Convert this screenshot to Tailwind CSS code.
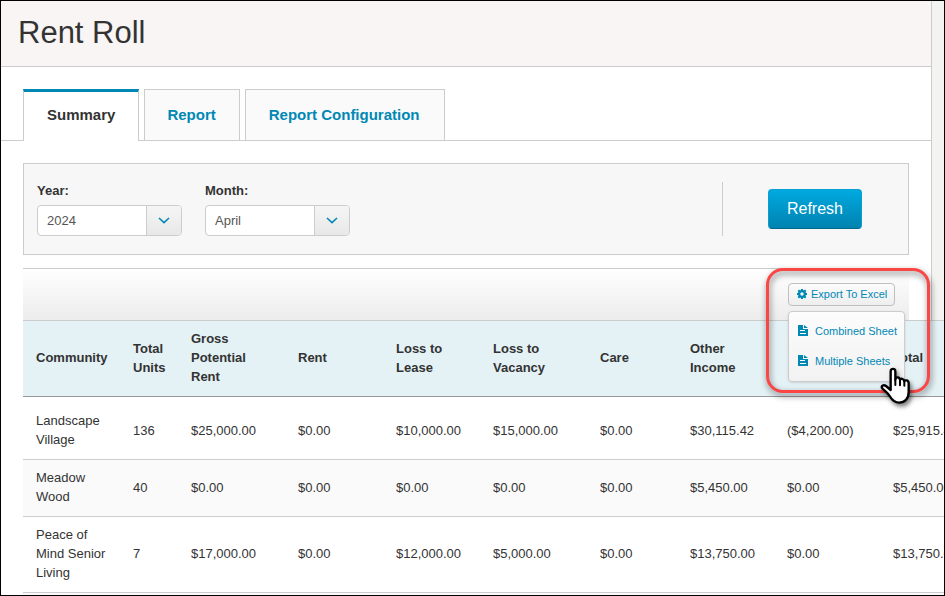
<!DOCTYPE html>
<html lang="en">
<head>
    <meta charset="UTF-8">
    <meta name="viewport" content="width=device-width, initial-scale=1.0">
    <title>Rent Roll</title>
    <script src="https://cdn.jsdelivr.net/npm/@tailwindcss/browser@4"></script>
</head>
<body class="h-screen overflow-hidden border border-black bg-[#f3f3f2] pr-3 font-['Liberation_Sans',Arial,sans-serif] text-[13px] leading-[19px] text-[#333]">
    <main class="min-h-full border-r border-[#ccc] bg-white">
        <!-- Page header -->
        <header class="border-b border-[#ccc] bg-[#f9f5f4] px-[17px] pt-[14px] pb-[15px]">
            <h1 class="text-[31px] leading-9">Rent Roll</h1>
        </header>

        <!-- Tabs -->
        <nav class="mt-[22px] flex gap-[5px] border-b border-[#ccc] pl-[22px] text-[15px] font-bold">
            <a href="#summary" class="-mb-px flex h-[52px] items-center border-x border-t-3 border-x-[#ccc] border-t-[#0088b5] bg-white px-[23px] pb-[5px]">Summary</a>
            <a href="#report" class="flex h-[51px] items-center border border-b-0 border-[#ccc] bg-[#fafafa] pr-[23px] pl-[22px] pb-px text-[#0088b5]">Report</a>
            <a href="#configuration" class="flex h-[51px] items-center border border-b-0 border-[#ccc] bg-[#fafafa] pr-6 pl-[23px] pb-px text-[#0088b5]">Report Configuration</a>
        </nav>

        <div class="px-[22px] pt-[22px]">
            <!-- Filters -->
            <form class="flex items-center justify-between border border-[#ccc] bg-[#f7f7f7] pt-[17px] pr-[46px] pb-[18px] pl-[13px]">
                <div class="flex gap-[23px]">
                    <div>
                        <label for="year" class="block font-bold">Year:</label>
                        <div class="relative mt-[5px] flex h-[31px] w-[145px] overflow-hidden rounded border border-[#ccc] bg-white">
                            <select id="year" class="w-full appearance-none pl-[9px] text-[#555]">
                                <option>2024</option>
                            </select>
                            <span class="pointer-events-none absolute inset-y-0 right-0 flex w-[35px] items-center justify-center border-l border-[#ccc] bg-linear-to-b from-[#f5f5f5] to-[#e8e8e8]">
                                <svg class="h-[7px] w-3" viewBox="0 0 12 7" fill="none" stroke="#0088b5" stroke-width="1.6"><path d="M1 1l5 4.6L11 1"/></svg>
                            </span>
                        </div>
                    </div>
                    <div>
                        <label for="month" class="block font-bold">Month:</label>
                        <div class="relative mt-[5px] flex h-[31px] w-[145px] overflow-hidden rounded border border-[#ccc] bg-white">
                            <select id="month" class="w-full appearance-none pl-[9px] text-[#555]">
                                <option>April</option>
                            </select>
                            <span class="pointer-events-none absolute inset-y-0 right-0 flex w-[35px] items-center justify-center border-l border-[#ccc] bg-linear-to-b from-[#f5f5f5] to-[#e8e8e8]">
                                <svg class="h-[7px] w-3" viewBox="0 0 12 7" fill="none" stroke="#0088b5" stroke-width="1.6"><path d="M1 1l5 4.6L11 1"/></svg>
                            </span>
                        </div>
                    </div>
                </div>
                <div class="flex h-[54px] items-center border-l border-[#ccc] pl-[45px]">
                    <button type="button" class="h-10 rounded border border-[#0a9fd2] border-b-[#006a8e] bg-linear-to-b from-[#00a9e0] to-[#0083b0] px-[18px] text-base text-white">Refresh</button>
                </div>
            </form>

            <!-- Table toolbar -->
            <div class="relative z-10 mt-[13px] flex h-[52px] justify-end border-t border-[#ccc] bg-linear-to-b from-white to-[#ececec] pt-[14px] pr-[14px] text-[11px] text-[#0088b5]">
                <div class="relative">
                    <button type="button" class="flex h-[23px] w-[107px] items-center gap-1 rounded border border-[#bfbfbf] bg-linear-to-b from-[#fcfcfc] to-[#eee] pl-2 whitespace-nowrap">
                        <svg class="mb-px size-[10px] shrink-0" viewBox="0 0 20 20">
                            <circle cx="10" cy="10" r="5.7" fill="none" stroke="#0088b5" stroke-width="4.4"/>
                            <g stroke="#0088b5" stroke-width="4"><path d="M10 0v4M10 16v4M0 10h4M16 10h4M2.6 2.6l3 3M14.4 14.4l3 3M2.6 17.4l3-3M14.4 5.6l3-3"/></g>
                        </svg>
                        Export To Excel
                    </button>
                    <ul class="absolute top-[28px] left-0 w-[117px] rounded border border-[#ccc] bg-linear-to-b from-[#fcfcfc] to-[#f2f2f2] pt-1 pb-[5px] shadow-sm">
                        <li>
                            <a href="#combined" class="flex h-[30px] items-center gap-[7px] pl-[9px] whitespace-nowrap">
                                <svg class="mb-0.5 h-[11px] w-[10px] shrink-0" viewBox="0 0 10 11"><path fill="#0088b5" d="M0 0h5v4h5v7H0zM6 0l4 3H6z"/><path stroke="#fff" d="M2 5.5h5M2 8.5h6"/></svg>
                                Combined Sheet
                            </a>
                        </li>
                        <li>
                            <a href="#multiple" class="flex h-[30px] items-center gap-[7px] pl-[9px] whitespace-nowrap">
                                <svg class="mb-0.5 h-[11px] w-[10px] shrink-0" viewBox="0 0 10 11"><path fill="#0088b5" d="M0 0h5v4h5v7H0zM6 0l4 3H6z"/><path stroke="#fff" d="M2 5.5h5M2 8.5h6"/></svg>
                                Multiple Sheets
                            </a>
                        </li>
                    </ul>
                </div>

                <!-- Callout and pointer -->
                <div class="pointer-events-none absolute -top-px -right-[21px] h-[125px] w-[164px] rounded-[17px] border-3 border-[#fb4646] drop-shadow-[1px_3px_3px_rgba(0,0,0,0.55)]"></div>
                <svg class="pointer-events-none absolute top-[99px] -right-px h-9 w-[29px] overflow-visible drop-shadow-[2px_3px_2px_rgba(0,0,0,0.5)]" viewBox="0 0 87 108" fill="#fff" stroke="#000" stroke-width="7" stroke-linejoin="round" stroke-linecap="round">
                    <path d="M29 10C29 0 43 0 43 10V35C44 26 56 26 57 36C58 30 69 31 70 40C71 35 83 36 83 46V72C83 92 71 104 55 104C42 104 34 98 26 84C20 74 10 68 3 60C0 53 8 49 15 54L29 66Z"/>
                    <path fill="none" stroke-width="6" d="M43 35v16M57 36v16M70 40v13"/>
                </svg>
            </div>

            <!-- Rent roll table, runs past the right edge -->
            <div class="min-w-[954px] bg-[#fafafa] pb-2">
                <table class="w-full table-fixed border-separate border-spacing-0 bg-white text-left">
                    <colgroup>
                        <col class="w-[97px]">
                        <col class="w-[58px]">
                        <col class="w-[107px]">
                        <col class="w-[98px]">
                        <col class="w-[97px]">
                        <col class="w-[107px]">
                        <col class="w-[90px]">
                        <col class="w-[97px]">
                        <col class="w-[106px]">
                        <col class="w-[97px]">
                    </colgroup>
                    <thead class="bg-[#e4f1f5] *:*:border-t *:*:border-b *:*:border-t-[#ccc] *:*:border-b-[#999] *:*:pt-2 *:*:pb-[10px] *:*:pl-[13px]">
                        <tr>
                            <th>Community</th>
                            <th>Total<br>Units</th>
                            <th>Gross<br>Potential<br>Rent</th>
                            <th>Rent</th>
                            <th>Loss to<br>Lease</th>
                            <th>Loss to<br>Vacancy</th>
                            <th>Care</th>
                            <th>Other<br>Income</th>
                            <td></td>
                            <th>Total</th>
                        </tr>
                    </thead>
                    <tbody class="*:*:border-b *:*:border-[#ccc] *:*:pb-[10px] *:*:pl-[13px]">
                        <tr class="*:pt-[14px]">
                            <td>Landscape<br>Village</td>
                            <td>136</td>
                            <td>$25,000.00</td>
                            <td>$0.00</td>
                            <td>$10,000.00</td>
                            <td>$15,000.00</td>
                            <td>$0.00</td>
                            <td>$30,115.42</td>
                            <td>($4,200.00)</td>
                            <td>$25,915.42</td>
                        </tr>
                        <tr class="bg-[#fafafa] *:pt-2">
                            <td>Meadow<br>Wood</td>
                            <td>40</td>
                            <td>$0.00</td>
                            <td>$0.00</td>
                            <td>$0.00</td>
                            <td>$0.00</td>
                            <td>$0.00</td>
                            <td>$5,450.00</td>
                            <td>$0.00</td>
                            <td>$5,450.00</td>
                        </tr>
                        <tr class="*:pt-2">
                            <td>Peace of<br>Mind Senior<br>Living</td>
                            <td>7</td>
                            <td>$17,000.00</td>
                            <td>$0.00</td>
                            <td>$12,000.00</td>
                            <td>$5,000.00</td>
                            <td>$0.00</td>
                            <td>$13,750.00</td>
                            <td>$0.00</td>
                            <td>$13,750.00</td>
                        </tr>
                    </tbody>
                </table>
            </div>
        </div>
    </main>
</body>
</html>
